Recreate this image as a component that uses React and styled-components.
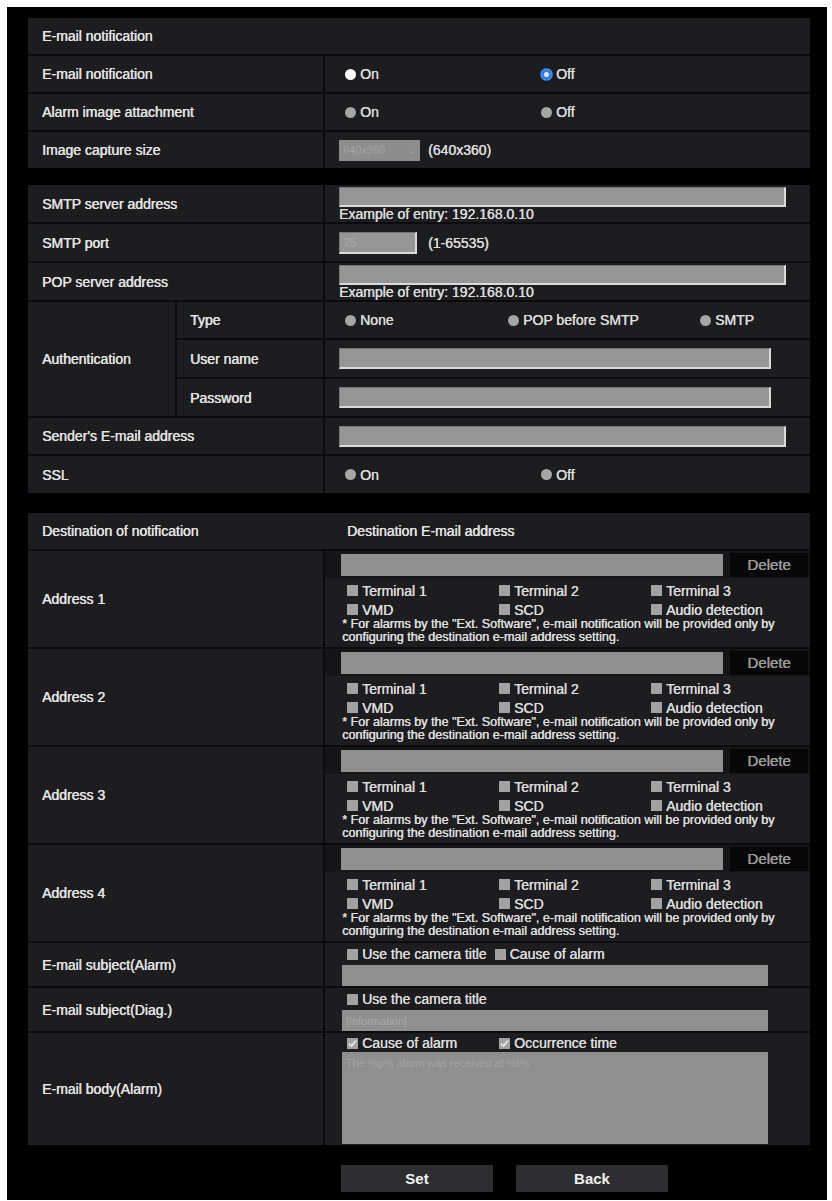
import React from 'react';
import styled, { createGlobalStyle, css } from 'styled-components';

const GlobalStyle = createGlobalStyle`
  html, body { margin: 0; padding: 0; background: #fff; }
  body { font-family: "Liberation Sans", Arial, sans-serif; }
  * { box-sizing: border-box; }
`;

const semi = css`
  font-weight: 400;
  text-shadow: 0.4px 0 0 currentColor;
`;

const Frame = styled.div`
  margin: 7px 5px 3px 7px;
  background: #000;
  padding: 11px 17px 8px 21px;
`;

const Section = styled.div`
  display: grid;
  grid-template-columns: 147px 146px 485px;
  gap: 2px;
  background: #0b0b0d;
  margin-bottom: ${(p) => p.$mb || 0}px;
`;

const baseCell = css`
  background: #1d1d20;
  color: #e4e4e4;
  font-size: 14px;
  ${semi};
  min-height: ${(p) => p.$h || 37}px;
`;

const Header = styled.div`
  ${baseCell};
  grid-column: 1 / -1;
  display: grid;
  grid-template-columns: 305px 1fr;
  align-items: center;
  padding-left: 14px;
`;

const Label = styled.div`
  ${baseCell};
  grid-column: span ${(p) => p.$span || 2};
  grid-row: span ${(p) => p.$rows || 1};
  display: flex;
  align-items: center;
  padding-left: ${(p) => p.$pl ?? 14}px;
`;

const Value = styled.div`
  ${baseCell};
  display: flex;
  flex-direction: ${(p) => (p.$col ? 'column' : 'row')};
  align-items: ${(p) => (p.$col ? 'stretch' : 'center')};
  justify-content: flex-start;
  padding-left: ${(p) => p.$pl ?? 14}px;
  padding-top: ${(p) => p.$pt || 0}px;
`;

const RadioRow = styled.div`
  display: grid;
  grid-template-columns: ${(p) => p.$cols};
  padding-left: 6px;
  width: 100%;
  align-items: center;
`;

const RadioItem = styled.span`
  display: inline-flex;
  align-items: center;
  gap: 4px;
  font-size: 14px;
  color: #dcdcdc;
`;

const Dot = styled.span`
  width: 11px;
  height: 11px;
  border-radius: 50%;
  flex: none;
  background: ${(p) => (p.$state === 'on' ? '#ffffff' : '#a6a6a6')};
  ${(p) =>
    p.$state === 'checked' &&
    css`
      background: #dfeafb;
      box-shadow: inset 0 0 0 3px #2f7fe6, 0 0 0 1px #2a6fd0;
    `}
`;

const Radio = ({ state, children }) => (
  <RadioItem>
    <Dot $state={state} />
    {children}
  </RadioItem>
);

const TextInput = styled.input`
  display: block;
  width: ${(p) => p.$w}px;
  height: ${(p) => p.$ht || 21}px;
  margin: 0;
  padding: 0 4px;
  font-family: inherit;
  font-size: 11px;
  color: #aaaaaa;
  background: #969696;
  outline: none;
  ${(p) =>
    p.$bevel
      ? css`
          border-top: 1px solid #747474;
          border-left: 1px solid #747474;
          border-right: 2px solid #dadada;
          border-bottom: 2px solid #dadada;
        `
      : css`
          border: none;
          background: #8f8f8f;
        `}
  &::placeholder { color: #a9a9a9; }
`;

const SelectBox = styled.span`
  display: inline-flex;
  align-items: center;
  justify-content: space-between;
  width: 81px;
  height: 21px;
  padding: 0 4px;
  background: #8d8d8d;
  color: #a4a4a4;
  font-size: 11px;
  text-shadow: none;
`;

const Hint = styled.span`
  margin-left: ${(p) => p.$ml || 0}px;
  font-size: 14px;
  color: #dcdcdc;
  line-height: ${(p) => p.$lh || 'normal'};
`;

const InputBand = styled.div`
  display: flex;
  align-items: center;
  height: 27px;
  background: #151517;
  padding-left: 16px;
  gap: 7px;
`;

const DeleteButton = styled.button`
  width: 78px;
  height: 24px;
  border: none;
  background: #070707;
  color: #9c9c9c;
  font-family: inherit;
  font-size: 15px;
  ${semi};
  padding: 0;
  text-align: center;
`;

const CheckGrid = styled.div`
  display: grid;
  grid-template-columns: ${(p) => p.$cols || '152px 152px 1fr'};
  grid-auto-rows: ${(p) => p.$rh || 18}px;
  padding-left: ${(p) => p.$pl ?? 22}px;
  margin-top: ${(p) => p.$mt || 0}px;
  align-items: center;
`;

const CheckItem = styled.span`
  display: inline-flex;
  align-items: center;
  gap: 4px;
  font-size: 14px;
  color: #dcdcdc;
  margin-right: ${(p) => p.$mr || 0}px;
`;

const Box = styled.span`
  width: 11px;
  height: 11px;
  flex: none;
  background: #a2a2a2;
  display: inline-flex;
  align-items: center;
  justify-content: center;
`;

const Check = ({ checked, children, mr }) => (
  <CheckItem $mr={mr}>
    <Box>
      {checked && (
        <svg width="9" height="9" viewBox="0 0 9 9">
          <path d="M1.2 4.6 L3.5 7 L7.9 1.6" fill="none" stroke="#e8e8e8" strokeWidth="1.8" />
        </svg>
      )}
    </Box>
    {children}
  </CheckItem>
);

const Note = styled.div`
  padding-left: 17px;
  font-size: 12.6px;
  line-height: 13px;
  color: #dedede;
  margin-top: -1px;
  white-space: nowrap;
`;

const FieldStack = styled.div`
  display: flex;
  flex-direction: column;
  gap: ${(p) => p.$gap || 0}px;
`;

const TextArea = styled.div`
  width: 426px;
  height: 92px;
  background: #8f8f8f;
  color: #a3a3a3;
  font-size: 11px;
  text-shadow: none;
  padding: 5px 4px;
`;

const ButtonBar = styled.div`
  display: flex;
  gap: 23px;
  padding-left: 313px;
  margin-top: 20px;
`;

const ActionButton = styled.button`
  width: 152px;
  height: 27px;
  border: none;
  background: #2e2e30;
  color: #f2f2f2;
  font-family: "Liberation Sans Narrow", "Liberation Sans", Arial, sans-serif;
  font-size: 15px;
  font-weight: 700;
  padding: 0;
`;

const Address = ({ n }) => (
  <>
    <Label $h={96}>Address {n}</Label>
    <Value $col $pl={0} $h={96}>
      <InputBand>
        <TextInput $w={382} $ht={22} readOnly />
        <DeleteButton>Delete</DeleteButton>
      </InputBand>
      <CheckGrid $mt={3} $rh={19}>
        <Check>Terminal 1</Check>
        <Check>Terminal 2</Check>
        <Check>Terminal 3</Check>
        <Check>VMD</Check>
        <Check>SCD</Check>
        <Check>Audio detection</Check>
      </CheckGrid>
      <Note>
        * For alarms by the "Ext. Software", e-mail notification will be provided only by
        <br />
        configuring the destination e-mail address setting.
      </Note>
    </Value>
  </>
);

export default function App() {
  return (
    <>
      <GlobalStyle />
      <Frame>
        <Section $mb={17}>
          <Header $h={36}>
            <span>E-mail notification</span>
          </Header>
          <Label $h={36}>E-mail notification</Label>
          <Value $h={36}>
            <RadioRow $cols="196px 1fr">
              <Radio state="on">On</Radio>
              <Radio state="checked">Off</Radio>
            </RadioRow>
          </Value>
          <Label $h={36}>Alarm image attachment</Label>
          <Value $h={36}>
            <RadioRow $cols="196px 1fr">
              <Radio>On</Radio>
              <Radio>Off</Radio>
            </RadioRow>
          </Value>
          <Label $h={36}>Image capture size</Label>
          <Value $h={36}>
            <SelectBox>
              <span>640x360</span>
              <span>⌄</span>
            </SelectBox>
            <Hint $ml={8}>(640x360)</Hint>
          </Value>
        </Section>

        <Section $mb={20}>
          <Label $h={37}>SMTP server address</Label>
          <Value $col $pt={2} $h={37}>
            <TextInput $bevel $w={447} $ht={20} readOnly />
            <Hint $lh="15px">Example of entry: 192.168.0.10</Hint>
          </Value>
          <Label $h={37}>SMTP port</Label>
          <Value $h={37}>
            <TextInput $bevel $w={78} $ht={22} readOnly value="25" />
            <Hint $ml={11}>(1-65535)</Hint>
          </Value>
          <Label $h={37}>POP server address</Label>
          <Value $col $pt={2} $h={37}>
            <TextInput $bevel $w={447} $ht={20} readOnly />
            <Hint $lh="15px">Example of entry: 192.168.0.10</Hint>
          </Value>
          <Label $span={1} $rows={3}>Authentication</Label>
          <Label $span={1} $pl={13} $h={36}>Type</Label>
          <Value $h={36}>
            <RadioRow $cols="163px 192px 1fr">
              <Radio>None</Radio>
              <Radio>POP before SMTP</Radio>
              <Radio>SMTP</Radio>
            </RadioRow>
          </Value>
          <Label $span={1} $pl={13} $h={37}>User name</Label>
          <Value $h={37}>
            <TextInput $bevel $w={432} $ht={21} readOnly />
          </Value>
          <Label $span={1} $pl={13} $h={37}>Password</Label>
          <Value $h={37}>
            <TextInput $bevel $w={432} $ht={21} readOnly />
          </Value>
          <Label $h={36}>Sender's E-mail address</Label>
          <Value $h={36}>
            <TextInput $bevel $w={447} $ht={21} readOnly />
          </Value>
          <Label $h={37}>SSL</Label>
          <Value $h={37}>
            <RadioRow $cols="196px 1fr">
              <Radio>On</Radio>
              <Radio>Off</Radio>
            </RadioRow>
          </Value>
        </Section>

        <Section>
          <Header $h={36}>
            <span>Destination of notification</span>
            <span>Destination E-mail address</span>
          </Header>
          <Address n={1} />
          <Address n={2} />
          <Address n={3} />
          <Address n={4} />
          <Label $h={42}>E-mail subject(Alarm)</Label>
          <Value $col $pl={17} $pt={2} $h={42}>
            <FieldStack $gap={2}>
              <CheckGrid $pl={5} $cols="auto auto 1fr">
                <Check mr={8}>Use the camera title</Check>
                <Check>Cause of alarm</Check>
              </CheckGrid>
              <TextInput $w={426} $ht={21} readOnly />
            </FieldStack>
          </Value>
          <Label $h={42}>E-mail subject(Diag.)</Label>
          <Value $col $pl={17} $pt={2} $h={42}>
            <FieldStack $gap={2}>
              <CheckGrid $pl={5} $cols="auto 1fr">
                <Check>Use the camera title</Check>
              </CheckGrid>
              <TextInput $w={426} $ht={21} readOnly placeholder="[Information]" />
            </FieldStack>
          </Value>
          <Label $h={112}>E-mail body(Alarm)</Label>
          <Value $col $pl={17} $pt={1} $h={112}>
            <FieldStack>
              <CheckGrid $pl={5} $cols="152px 1fr">
                <Check checked>Cause of alarm</Check>
                <Check checked>Occurrence time</Check>
              </CheckGrid>
              <TextArea>The %p% alarm was received at %t%</TextArea>
            </FieldStack>
          </Value>
        </Section>

        <ButtonBar>
          <ActionButton>Set</ActionButton>
          <ActionButton>Back</ActionButton>
        </ButtonBar>
      </Frame>
    </>
  );
}
